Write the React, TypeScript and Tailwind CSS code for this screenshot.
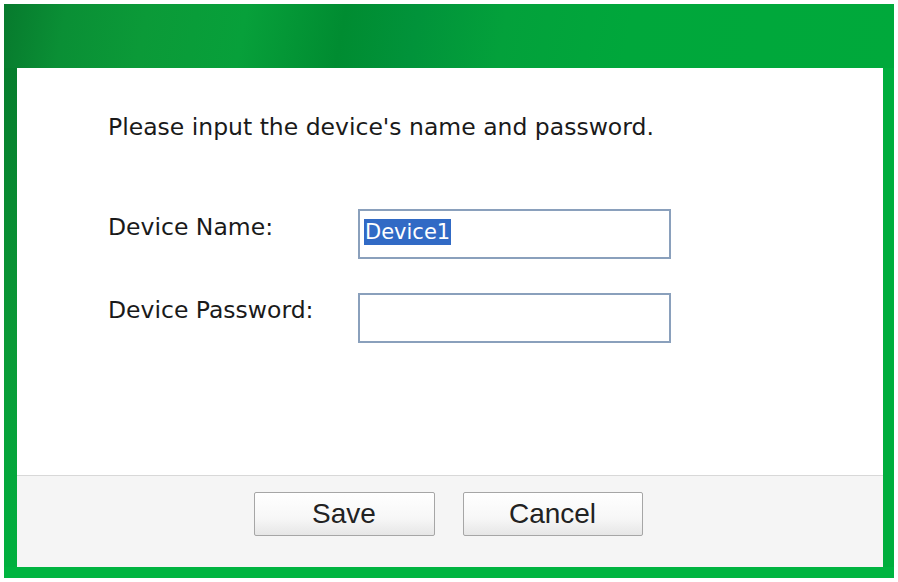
export default function App() {
  const font = { fontFamily: '"DejaVu Sans", Verdana, sans-serif' };

  return (
    <div className="w-full h-[582px] bg-white p-[4px]">
      <div className="h-full flex flex-col bg-[#00ac3d]">
        {/* green header strip */}
        <div className="h-[64px] shrink-0 bg-[linear-gradient(100deg,#077a2d_0%,#0a8f35_7%,#0b9a38_16%,#07a03a_27%,#008c31_38%,#01933a_46%,#03a13b_56%,#00a73b_70%,#00a93b_100%)]" />

        <div className="flex-1 flex">
          <div className="w-[13px] shrink-0 bg-[linear-gradient(to_bottom,#067d2d,#0a9a37_55%,#00b03f)]" />
          <div className="flex-1 flex flex-col bg-white" style={font}>
            <div className="flex-1 pl-[91px] pt-[44px] text-[#1a1a1a]">
              <p className="text-[23.5px] leading-[30px]">Please input the device's name and password.</p>

              <div className="mt-[67px] flex items-center">
                <span className="w-[250px] text-[23.5px] leading-[30px] -mt-[14px]">Device Name:</span>
                <div className="w-[313px] h-[50px] border-2 border-[#8aa0bc] flex items-center px-[4px]">
                  <span className="bg-[#316ac5] text-white text-[21px] leading-[26px] px-[1px] -mt-[4px]">Device1</span>
                </div>
              </div>

              <div className="mt-[34px] flex items-center">
                <span className="w-[250px] text-[23.5px] leading-[30px] -mt-[16px]">Device Password:</span>
                <div className="w-[313px] h-[50px] border-2 border-[#8aa0bc]" />
              </div>
            </div>

            <div className="h-[92px] shrink-0 border-t border-[#d8d8d8] bg-[#f5f5f5] flex justify-center gap-[28px] pt-[16px] pr-[4px]">
              <button className="w-[181px] h-[44px] rounded-[2px] border border-[#a6a6a6] bg-[linear-gradient(#ffffff,#f7f7f7_60%,#e6e6e6)] text-[28px] text-[#222] font-['Liberation_Sans',Arial,sans-serif] leading-none">
                Save
              </button>
              <button className="w-[180px] h-[44px] rounded-[2px] border border-[#a6a6a6] bg-[linear-gradient(#ffffff,#f7f7f7_60%,#e6e6e6)] text-[28px] text-[#222] font-['Liberation_Sans',Arial,sans-serif] leading-none">
                Cancel
              </button>
            </div>
          </div>
          <div className="w-[11px] shrink-0 bg-[#00ae3d]" />
        </div>

        <div className="h-[11px] shrink-0 bg-[#00b440]" />
      </div>
    </div>
  );
}
